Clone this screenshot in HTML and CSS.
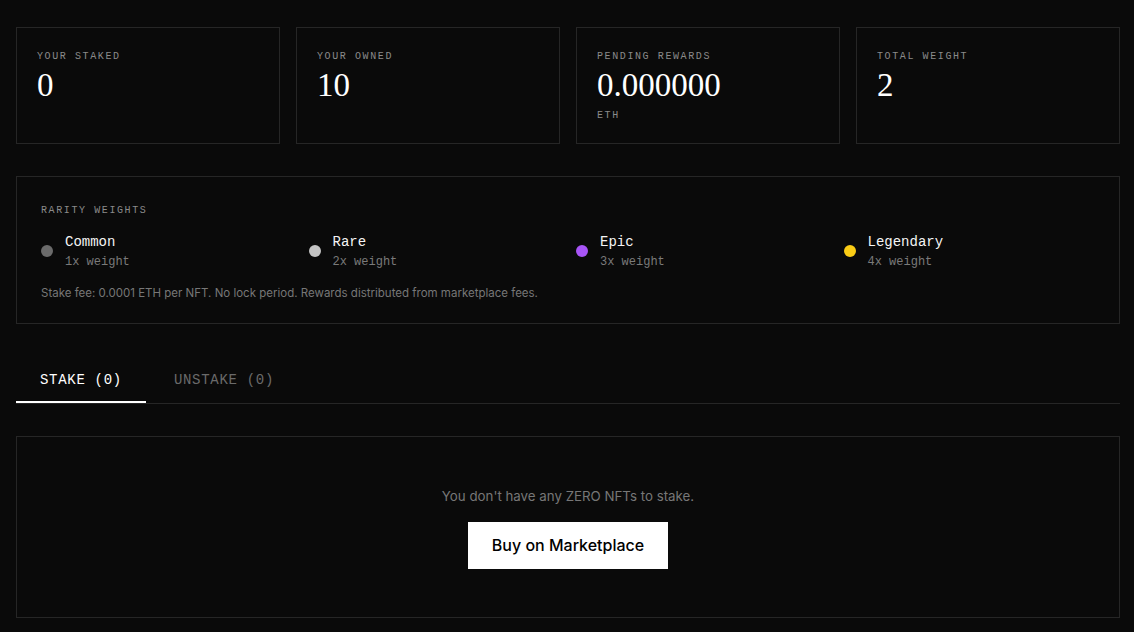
FILE: index.html
```html
<!DOCTYPE html>
<html lang="en">
<head>
    <meta charset="UTF-8">
    <meta name="viewport" content="width=device-width, initial-scale=1.0">
    <title>Staking</title>
    <link rel="stylesheet" href="styles.css">
</head>
<body>
    <div id="page">
        <div class="stats">
            <div class="stat-card">
                <div class="label">Your Staked</div>
                <div class="value">0</div>
            </div>
            <div class="stat-card">
                <div class="label">Your Owned</div>
                <div class="value">10</div>
            </div>
            <div class="stat-card">
                <div class="label">Pending Rewards</div>
                <div class="value">0.000000</div>
                <div class="label unit">ETH</div>
            </div>
            <div class="stat-card">
                <div class="label">Total Weight</div>
                <div class="value">2</div>
            </div>
        </div>

        <div class="rarity">
            <div class="label">Rarity Weights</div>
            <div class="rarity-list">
                <div class="rarity-item">
                    <span class="dot common"></span>
                    <div>
                        <div class="name">Common</div>
                        <div class="weight">1x weight</div>
                    </div>
                </div>
                <div class="rarity-item">
                    <span class="dot rare"></span>
                    <div>
                        <div class="name">Rare</div>
                        <div class="weight">2x weight</div>
                    </div>
                </div>
                <div class="rarity-item">
                    <span class="dot epic"></span>
                    <div>
                        <div class="name">Epic</div>
                        <div class="weight">3x weight</div>
                    </div>
                </div>
                <div class="rarity-item">
                    <span class="dot legendary"></span>
                    <div>
                        <div class="name">Legendary</div>
                        <div class="weight">4x weight</div>
                    </div>
                </div>
            </div>
            <p class="fee">Stake fee: 0.0001 ETH per NFT. No lock period. Rewards distributed from marketplace fees.</p>
        </div>

        <div class="tabs">
            <div class="tab active">STAKE (0)</div>
            <div class="tab">UNSTAKE (0)</div>
        </div>

        <div class="empty">
            <p>You don't have any ZERO NFTs to stake.</p>
            <a class="buy-btn" href="#">Buy on Marketplace</a>
        </div>
    </div>
</body>
</html>
```

FILE: styles.css
```css
* {
    box-sizing: border-box;
}
body {
    margin: 0;
    background-color: #0a0a0a;
    color: #fff;
    font-family: "Inter", "Liberation Sans", sans-serif;
}
#page {
    width: 1104px;
    margin-left: 16px;
    padding-top: 27px;
}
.label {
    font-family: "Liberation Mono", monospace;
    font-size: 10px;
    line-height: 12px;
    letter-spacing: 1.6px;
    text-transform: uppercase;
    color: #8a8a8a;
}
.stats {
    display: grid;
    grid-template-columns: repeat(4, 1fr);
    gap: 16px;
}
.stat-card {
    border: 1px solid #262626;
    padding: 23px 20px 21px;
}
.stat-card .value {
    font-family: "Liberation Serif", serif;
    font-size: 33px;
    line-height: 38px;
    margin-top: 3px;
}
.stat-card .unit {
    margin-top: 6px;
}
.rarity {
    margin-top: 32px;
    border: 1px solid #262626;
    padding: 28px 24px 22px;
}
.rarity-list {
    display: grid;
    grid-template-columns: repeat(4, 1fr);
    gap: 16px;
    margin-top: 16px;
}
.rarity-item {
    display: flex;
    align-items: center;
    gap: 12px;
}
.dot {
    width: 12px;
    height: 12px;
    border-radius: 50%;
    margin-top: -2px;
}
.dot.common { background-color: #6b6b6b; }
.dot.rare { background-color: #c4c4c4; }
.dot.epic { background-color: #a855f7; }
.dot.legendary { background-color: #facc15; }
.rarity-item .name {
    font-family: "Liberation Mono", monospace;
    font-size: 14px;
    line-height: 18px;
    color: #f5f5f5;
}
.rarity-item .weight {
    font-family: "Liberation Mono", monospace;
    font-size: 12px;
    line-height: 16px;
    margin-top: 3px;
    color: #7a7a7a;
}
.fee {
    margin: 15px 0 0;
    font-size: 11.5px;
    line-height: 16px;
    color: #777;
}
.tabs {
    margin-top: 32px;
    display: flex;
    gap: 4px;
    border-bottom: 1px solid #262626;
}
.tab {
    font-family: "Liberation Mono", monospace;
    font-size: 14px;
    line-height: 16px;
    letter-spacing: 0.7px;
    padding: 16px 24px 13px;
    color: #6a6a6a;
    border-bottom: 2px solid transparent;
}
.tab.active {
    color: #fff;
    border-bottom-color: #fff;
}
.empty {
    margin-top: 32px;
    border: 1px solid #262626;
    padding: 50px 20px 48px;
    display: flex;
    flex-direction: column;
    align-items: center;
}
.empty p {
    margin: 0;
    font-size: 13.3px;
    line-height: 18px;
    color: #777;
}
.buy-btn {
    margin-top: 17px;
    background-color: #fff;
    color: #000;
    text-decoration: none;
    font-size: 16px;
    font-weight: 500;
    line-height: 47px;
    width: 200px;
    text-align: center;
}
```
